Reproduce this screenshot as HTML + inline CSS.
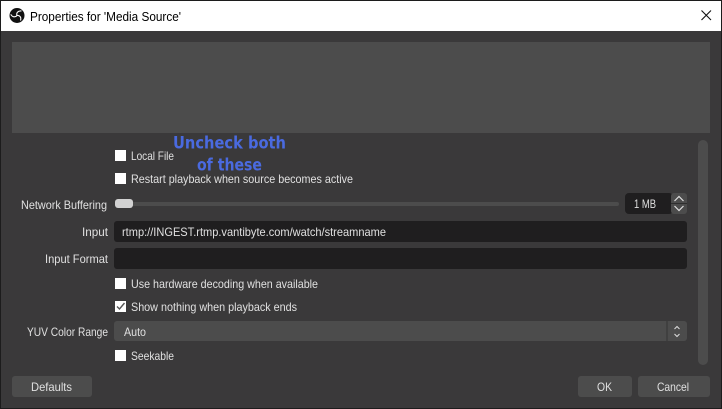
<!DOCTYPE html>
<html>
<head>
<meta charset="utf-8">
<style>
html,body{margin:0;padding:0;background:#3a393a;}
svg{display:block;}
text{font-family:"Liberation Sans",sans-serif;font-size:12px;fill:#e0e0e0;}
.t{fill:#000;font-size:12.5px;}
.o{font-family:"DejaVu Sans",sans-serif;font-weight:bold;font-size:16.5px;fill:#4a6ae0;}
</style>
</head>
<body>
<svg width="722" height="409" viewBox="0 0 722 409" xmlns="http://www.w3.org/2000/svg">
<rect width="722" height="409" fill="#1c1c1c"/>
<rect x="1" y="1" width="720" height="407" fill="#3a393a"/>
<rect x="1" y="1" width="720" height="30" fill="#fff"/>
<rect x="12" y="42" width="698" height="91" fill="#4c4c4c"/>

<circle cx="17" cy="15.500" r="7.500" fill="#111"/>
<g fill="none" stroke="#fff" stroke-width="1.100">
<path d="M17 15.500c-1-2.500 1-5 4.500-4.500"/>
<path d="M17 15.500c2.600-.4 4.600 1.700 3.500 5"/>
<path d="M17 15.500c-1.600 2-4.800 1.800-6.200-1.200"/>
</g>
<text class="t" x="30" y="21" textLength="151" lengthAdjust="spacingAndGlyphs">Properties for 'Media Source'</text>
<path d="M701.500 10.500l9.500 9.500M711 10.500l-9.500 9.500" stroke="#111" stroke-width="1.100" fill="none"/>

<rect x="698" y="140" width="10" height="225" rx="5" fill="#4c4c4c"/>

<rect x="115" y="150" width="11" height="11" fill="#fff"/>
<text x="131" y="160" textLength="43" lengthAdjust="spacingAndGlyphs">Local File</text>
<rect x="115" y="173" width="11" height="11" fill="#fff"/>
<text x="131" y="183" textLength="222" lengthAdjust="spacingAndGlyphs">Restart playback when source becomes active</text>

<text x="21" y="209" textLength="86" lengthAdjust="spacingAndGlyphs">Network Buffering</text>
<rect x="115" y="202" width="504" height="4" rx="2" fill="#4c4c4c"/>
<rect x="115" y="199" width="18" height="9" rx="3" fill="#d2d2d2"/>
<rect x="625" y="193" width="48" height="21" rx="4" fill="#1f1e1f"/>
<text x="634" y="208" textLength="22" lengthAdjust="spacingAndGlyphs">1 MB</text>
<rect x="671" y="193" width="16" height="21" rx="3" fill="#4c4c4c"/>
<rect x="671" y="203" width="16" height="1" fill="#2e2e2e"/>
<path d="M674.500 201l4.500-4.500 4.500 4.500M674.500 206l4.500 4.500 4.500-4.500" fill="none" stroke="#e0e0e0" stroke-width="1.200"/>

<text x="82" y="236" textLength="26" lengthAdjust="spacingAndGlyphs">Input</text>
<rect x="114" y="221" width="573" height="21" rx="3" fill="#1f1e1f"/>
<text x="122" y="236" textLength="264" lengthAdjust="spacingAndGlyphs">rtmp://INGEST.rtmp.vantibyte.com/watch/streamname</text>

<text x="45" y="263" textLength="63" lengthAdjust="spacingAndGlyphs">Input Format</text>
<rect x="114" y="248" width="573" height="21" rx="3" fill="#1f1e1f"/>

<rect x="115" y="278" width="11" height="11" fill="#fff"/>
<text x="131" y="288" textLength="187" lengthAdjust="spacingAndGlyphs">Use hardware decoding when available</text>
<rect x="115" y="301" width="11" height="11" fill="#fff"/>
<path d="M117 306.500l2.500 2.500 5-6" fill="none" stroke="#555" stroke-width="1.400"/>
<text x="131" y="311" textLength="166" lengthAdjust="spacingAndGlyphs">Show nothing when playback ends</text>

<text x="27" y="336" textLength="81" lengthAdjust="spacingAndGlyphs">YUV Color Range</text>
<rect x="114" y="321" width="573" height="20" rx="3" fill="#4c4c4c"/>
<rect x="666.500" y="321" width="1" height="20" fill="#333"/>
<text x="124" y="336" textLength="22" lengthAdjust="spacingAndGlyphs">Auto</text>
<path d="M674.500 329l2.500-2.500 2.500 2.500M674.500 334l2.500 2.500 2.500-2.500" fill="none" stroke="#ddd" stroke-width="1"/>

<rect x="115" y="350" width="11" height="11" fill="#fff"/>
<text x="131" y="360" textLength="43" lengthAdjust="spacingAndGlyphs">Seekable</text>

<rect x="12" y="376" width="80" height="21" rx="3" fill="#4c4c4c"/>
<text x="31" y="391" textLength="41" lengthAdjust="spacingAndGlyphs">Defaults</text>
<rect x="578" y="376" width="54" height="21" rx="3" fill="#4c4c4c"/>
<text x="597" y="391" textLength="15" lengthAdjust="spacingAndGlyphs">OK</text>
<rect x="638" y="376" width="72" height="21" rx="3" fill="#4c4c4c"/>
<text x="657" y="391" textLength="32" lengthAdjust="spacingAndGlyphs">Cancel</text>

<text class="o" x="173" y="148.500" textLength="113" lengthAdjust="spacingAndGlyphs">Uncheck both</text>
<text class="o" x="197" y="170.500" textLength="65" lengthAdjust="spacingAndGlyphs">of these</text>
</svg>
</body>
</html>
